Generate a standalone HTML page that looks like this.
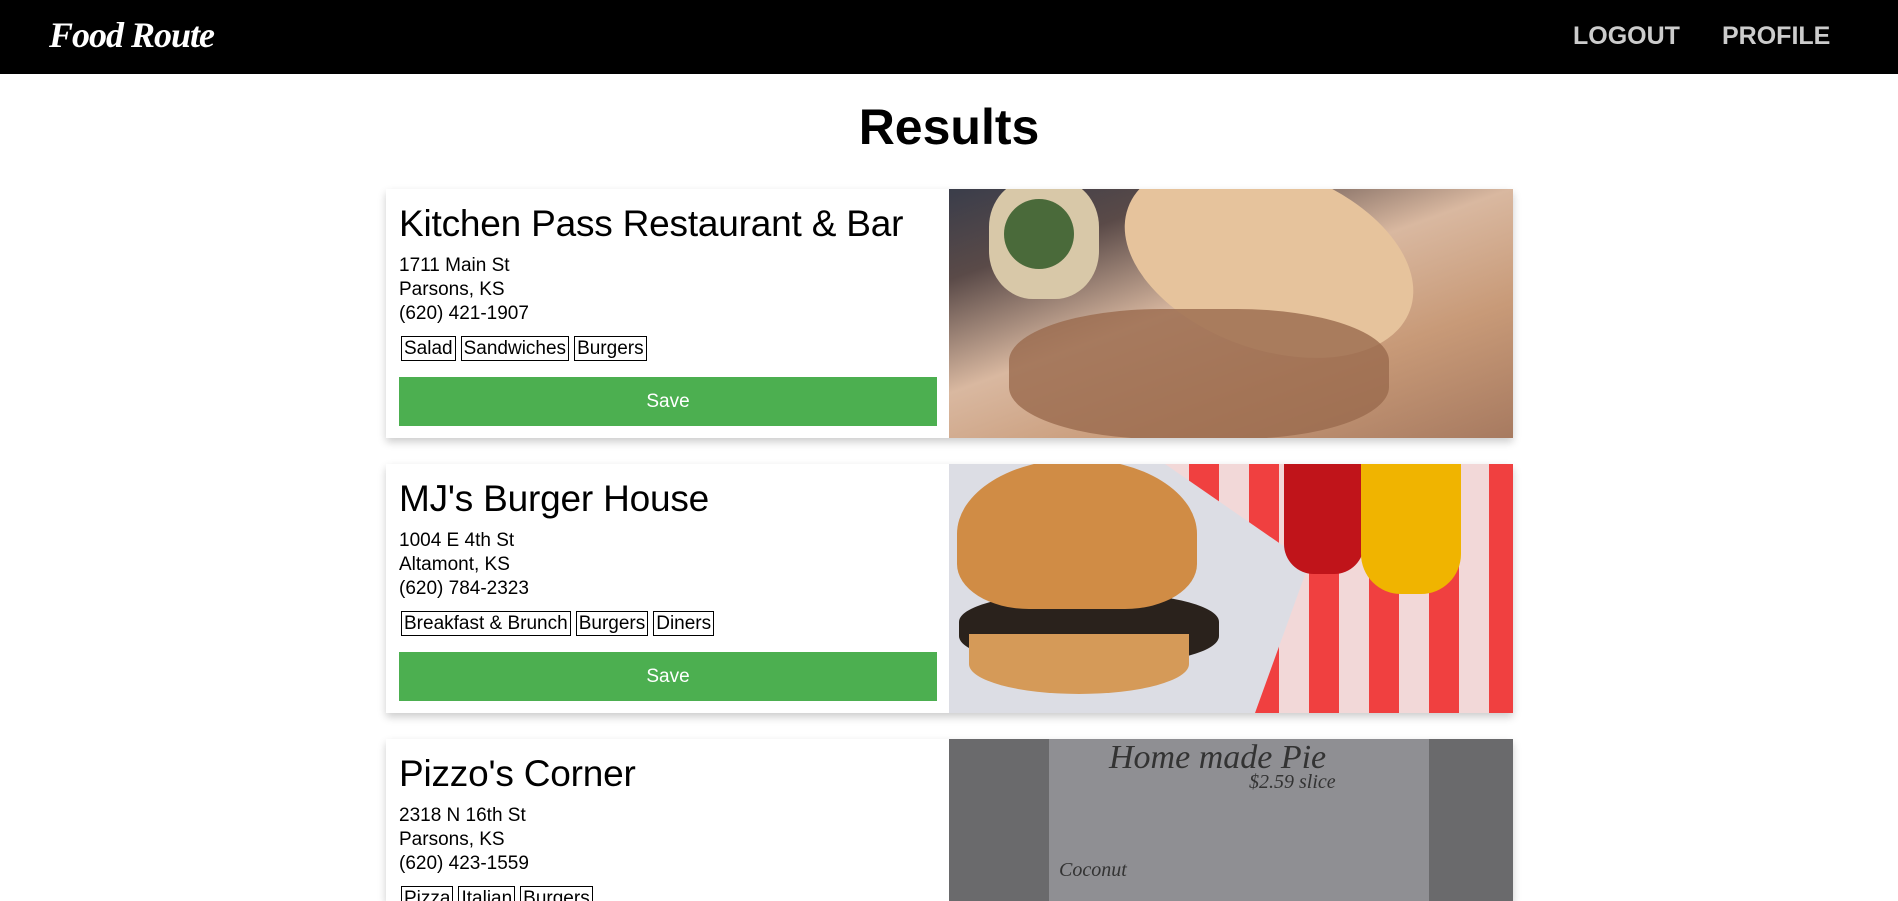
<!DOCTYPE html>
<html style="height:901px;overflow:hidden"><head><meta charset="utf-8"><style>
*{box-sizing:border-box;margin:0;padding:0}
html,body{height:901px;overflow:hidden}
body{width:1898px;background:#fff;font-family:"Liberation Sans",sans-serif;position:relative}
.nav{position:absolute;left:0;top:0;width:1898px;height:74px;background:#000}
.logo{position:absolute;left:49px;top:14px;color:#fff;font-family:"Liberation Serif",serif;font-style:italic;font-weight:bold;font-size:36px;letter-spacing:-1px}
.nl{position:absolute;top:22px;color:#ccc;font-weight:bold;font-size:25px}
h1{position:absolute;top:98px;left:0;width:1898px;text-align:center;font-size:50px;font-weight:bold;color:#000}
.card{position:absolute;left:386px;width:1127px;height:249px;background:#fff;box-shadow:0 4px 8px rgba(0,0,0,.2);overflow:hidden}
.card h2{position:absolute;left:13px;top:14px;font-size:37px;font-weight:normal;color:#000;letter-spacing:-0.2px}
.addr{position:absolute;left:13px;top:65px;font-size:19px;line-height:24px;color:#000}
.tags{position:absolute;left:15px;top:147px;display:flex;gap:5px}
.tags span{border:1px solid #000;font-size:19px;line-height:23px;padding:0 2px}
.save{position:absolute;left:13px;top:188px;width:538px;height:49px;background:#4CAF50;color:#fff;font-size:19px;text-align:center;line-height:49px}
.img{position:absolute;left:563px;top:0;width:564px;height:249px;overflow:hidden}
</style></head><body>
<div class="nav"><div class="logo">Food Route</div>
<div class="nl" style="left:1573px">LOGOUT</div><div class="nl" style="left:1722px">PROFILE</div></div>
<h1>Results</h1>

<div class="card" style="top:189px">
<h2>Kitchen Pass Restaurant &amp; Bar</h2>
<div class="addr">1711 Main St<br>Parsons, KS<br>(620) 421-1907</div>
<div class="tags"><span>Salad</span><span>Sandwiches</span><span>Burgers</span></div>
<div class="save">Save</div>
<div class="img" style="background:linear-gradient(160deg,#3a3d4a 0%,#5a4a48 20%,#d9b8a0 45%,#c89a78 70%,#a77a60 100%)">
<div style="position:absolute;left:170px;top:-20px;width:300px;height:180px;border-radius:50%;background:#e6c39c;transform:rotate(20deg)"></div>
<div style="position:absolute;left:40px;top:-10px;width:110px;height:120px;border-radius:40%;background:#d8c8a8"></div>
<div style="position:absolute;left:55px;top:10px;width:70px;height:70px;border-radius:50%;background:#4a6a3a"></div>
<div style="position:absolute;left:60px;top:120px;width:380px;height:130px;border-radius:40%;background:#9a6a4e;opacity:.8"></div>
</div></div>

<div class="card" style="top:464px">
<h2>MJ's Burger House</h2>
<div class="addr">1004 E 4th St<br>Altamont, KS<br>(620) 784-2323</div>
<div class="tags"><span>Breakfast &amp; Brunch</span><span>Burgers</span><span>Diners</span></div>
<div class="save">Save</div>
<div class="img" style="background:repeating-linear-gradient(90deg,#f04040 0 30px,#f2d8d8 30px 60px)">
<div style="position:absolute;left:0;top:0;width:360px;height:249px;background:#dcdde4;clip-path:polygon(0 0,60% 0,100% 40%,85% 100%,0 100%)"></div>
<div style="position:absolute;left:335px;top:0;width:80px;height:110px;border-radius:0 0 30px 30px;background:#c0141a"></div>
<div style="position:absolute;left:412px;top:0;width:100px;height:130px;border-radius:0 0 40px 40px;background:#f0b400"></div>
<div style="position:absolute;left:10px;top:130px;width:260px;height:70px;border-radius:40%;background:#2a221c"></div>
<div style="position:absolute;left:20px;top:170px;width:220px;height:60px;border-radius:0 0 50% 50%;background:#d59a58"></div>
<div style="position:absolute;left:8px;top:-5px;width:240px;height:150px;border-radius:50% 50% 30% 30%;background:#d08c45"></div>
</div></div>

<div class="card" style="top:739px;height:162px">
<h2>Pizzo's Corner</h2>
<div class="addr">2318 N 16th St<br>Parsons, KS<br>(620) 423-1559</div>
<div class="tags"><span>Pizza</span><span>Italian</span><span>Burgers</span></div>
<div class="img" style="background:#6a6a6c;height:162px">
<div style="position:absolute;left:100px;top:0;width:380px;height:162px;background:#8f8f93"></div>
<div style="position:absolute;left:160px;top:0;font-family:'Liberation Serif',serif;font-style:italic;font-size:34px;color:#333">Home made Pie</div>
<div style="position:absolute;left:300px;top:32px;font-family:'Liberation Serif',serif;font-style:italic;font-size:20px;color:#333">$2.59 slice</div>
<div style="position:absolute;left:110px;top:120px;font-family:'Liberation Serif',serif;font-style:italic;font-size:20px;color:#333">Coconut</div>
</div></div>
</body></html>
